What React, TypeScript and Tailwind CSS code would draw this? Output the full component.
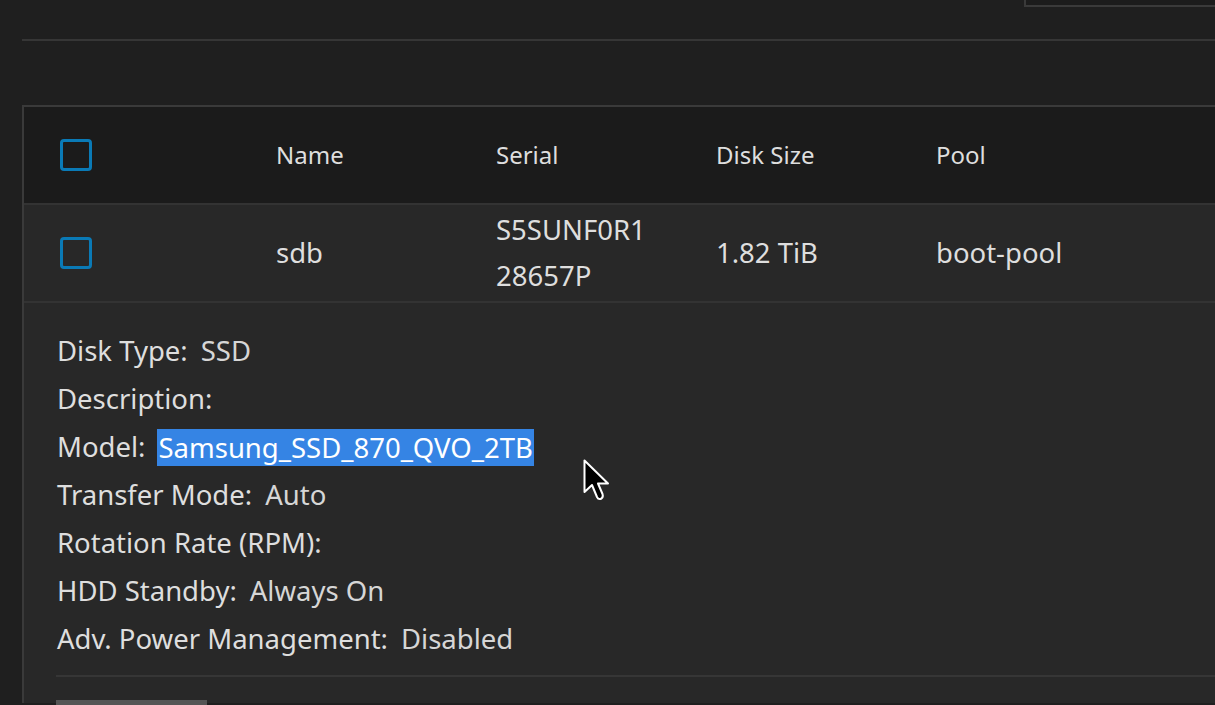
import React from "react";

const font = { fontFamily: '"Noto Sans", "Open Sans", sans-serif' };

function Checkbox() {
  return <div className="w-[32px] h-[32px] rounded-[4px] border-[3px] border-[#0a7ab6]" />;
}

const details: [string, string, boolean?][] = [
  ["Disk Type:", "SSD"],
  ["Description:", ""],
  ["Model:", "Samsung_SSD_870_QVO_2TB", true],
  ["Transfer Mode:", "Auto"],
  ["Rotation Rate (RPM):", ""],
  ["HDD Standby:", "Always On"],
  ["Adv. Power Management:", "Disabled"],
];

export default function App() {
  return (
    <div className="relative w-[1215px] h-[705px] overflow-hidden bg-[#1f1f1f] text-[#dedede]" style={font}>
      <div className="flex justify-end">
        <div className="w-[191px] h-[7px] border-l-2 border-b-2 border-[#3a3a3a] bg-[#1c1c1c]" />
      </div>
      <div className="mt-[32px] ml-[22px] h-[2px] bg-[#363636]" />
      <div className="mt-[64px] ml-[22px] border-l-2 border-t-2 border-[#3a3a3a]">
        <div className="grid grid-cols-[252px_220px_220px_220px_1fr] items-center h-[96px] bg-[#1b1b1b] text-[24px]">
          <div className="pl-[36px] flex items-center"><Checkbox /></div>
          <div>Name</div>
          <div>Serial</div>
          <div>Disk Size</div>
          <div>Pool</div>
        </div>
        <div className="h-[2px] bg-[#333333]" />
        <div className="grid grid-cols-[252px_220px_220px_220px_1fr] items-center h-[96px] bg-[#282828] text-[27.5px]">
          <div className="pl-[36px] flex items-center"><Checkbox /></div>
          <div>sdb</div>
          <div className="leading-[46px]">S5SUNF0R1<br />28657P</div>
          <div>1.82 TiB</div>
          <div>boot-pool</div>
        </div>
        <div className="h-[2px] bg-[#333333]" />
        <div className="bg-[#282828] pl-[32px] pt-[24px] h-[400px] text-[27.5px]">
          <div>
            {details.map(([l, v, sel]) => (
              <div key={l} className="flex items-center h-[48px] pl-[1px]">
                <span>{l}</span>
                {v && (
                  <span className={sel ? "ml-[12px] bg-[#3584e4] text-white h-[37px] leading-[37px] px-[1px]" : "ml-[13px] text-[#d6d6d6]"}>{v}</span>
                )}
              </div>
            ))}
          </div>
          <div className="mt-[12px] h-[2px] bg-[#363636]" />
          <div className="mt-[23px] w-[151px] h-[10px] bg-[#555555]" />
        </div>
      </div>
      <svg className="absolute left-[583px] top-[459px]" width="28" height="44" viewBox="0 0 28 44">
        <path d="M1.5 1.5 L1.5 33 L9 26 L14 38 Q15.5 41 18.5 39.5 Q20.5 38 19.5 35 L15 24.5 L25 24.5 Z" fill="#000" stroke="#fff" strokeWidth="2" strokeLinejoin="round" />
      </svg>
    </div>
  );
}
